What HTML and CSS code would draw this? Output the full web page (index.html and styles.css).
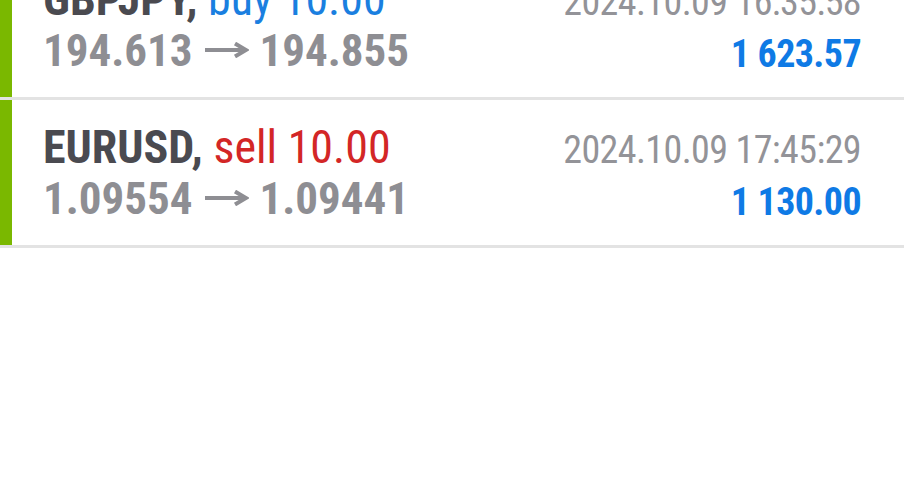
FILE: index.html
```html
<!DOCTYPE html>
<html>

<head>
    <title>History</title>
    <meta charset="utf-8">
    <meta name="viewport" content="width=device-width, initial-scale=1.0">
    <link rel="stylesheet" href="styles.css">
</head>

<body>

    <section id="deals">
        <article class="deal">
            <div class="indhold">
                <div class="venstre">
                    <p class="titel"><span class="symbol">GBPJPY,</span> <span class="buy">buy 10.00</span></p>
                    <p class="kurs">194.613<svg class="pil" width="44" height="16" viewBox="0 0 44 16"><path d="M0 8H41M30 1.5L41 8L30 14.5" /></svg>194.855</p>
                </div>
                <div class="hoejre">
                    <p class="tid">2024.10.09 16:35:58</p>
                    <p class="profit">1 623.57</p>
                </div>
            </div>
        </article>

        <article class="deal">
            <div class="indhold">
                <div class="venstre">
                    <p class="titel"><span class="symbol">EURUSD,</span> <span class="sell">sell 10.00</span></p>
                    <p class="kurs">1.09554<svg class="pil" width="44" height="16" viewBox="0 0 44 16"><path d="M0 8H41M30 1.5L41 8L30 14.5" /></svg>1.09441</p>
                </div>
                <div class="hoejre">
                    <p class="tid">2024.10.09 17:45:29</p>
                    <p class="profit">1 130.00</p>
                </div>
            </div>
        </article>
    </section>

</body></html>
```

FILE: styles.css
```css
body {
    margin: 0;
    background: white;
    font-family: "Roboto Condensed", Roboto, sans-serif;
    font-stretch: condensed;
}

#deals {
    margin-top: -48px;
}

.deal {
    border-bottom: 3px solid #e3e3e3;
}

.indhold {
    display: flex;
    justify-content: space-between;
    align-items: baseline;
    border-left: 12px solid #7ab800;
    padding: 21px 43px 17px 31px;
}

p {
    margin: 0;
    line-height: 52px;
    white-space: nowrap;
}

.titel {
    font-size: 46px;
}

.symbol {
    font-weight: bold;
    color: #4a4a50;
}

.buy {
    color: #1a7fe0;
}

.sell {
    color: #d32626;
}

.kurs {
    font-size: 45px;
    font-weight: bold;
    color: #8e8e93;
}

.pil {
    vertical-align: 8px;
    margin: 0 11px 0 12px;
}

.pil path {
    fill: none;
    stroke: #8e8e93;
    stroke-width: 4;
}

.hoejre {
    text-align: right;
}

.tid {
    font-size: 38px;
    letter-spacing: -0.6px;
    color: #939398;
}

.profit {
    font-size: 38px;
    letter-spacing: -0.6px;
    font-weight: bold;
    color: #0f7ae5;
}
```
